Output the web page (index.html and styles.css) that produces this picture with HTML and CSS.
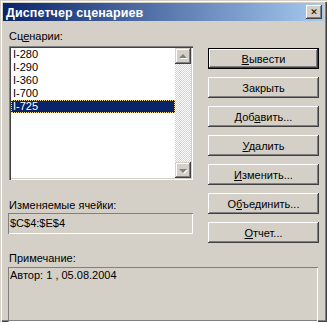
FILE: index.html
```html
<!DOCTYPE html>
<html lang="ru">
<head>
  <meta charset="UTF-8" />
  <title>Диспетчер сценариев</title>
  <link rel="stylesheet" href="styles.css">
</head>
<body>

  <div class="window">
    <div class="titlebar">
      <span class="title">Диспетчер сценариев</span>
      <span class="close-btn">&#x2715;</span>
    </div>

    <div class="content">
      <div class="main">
        <div class="left">
          <div class="label">Сц<u>е</u>нарии:</div>
          <div class="listbox">
            <ul class="items">
              <li>I-280</li>
              <li>I-290</li>
              <li>I-360</li>
              <li>I-700</li>
              <li class="selected">I-725</li>
            </ul>
            <div class="scrollbar">
              <div class="sb-btn"><span class="arrow up"></span></div>
              <div class="sb-track"></div>
              <div class="sb-btn"><span class="arrow down"></span></div>
            </div>
          </div>
          <div class="label label-cells">Изменяемые ячейки:</div>
          <div class="field">$C$4:$E$4</div>
        </div>

        <div class="buttons">
          <button class="btn default"><u>В</u>ывести</button>
          <button class="btn">Закрыть</button>
          <button class="btn">Доб<u>а</u>вить...</button>
          <button class="btn"><u>У</u>далить</button>
          <button class="btn"><u>И</u>зменить...</button>
          <button class="btn">О<u>б</u>ъединить...</button>
          <button class="btn"><u>О</u>тчет...</button>
        </div>
      </div>

      <div class="label label-note">Примечание:</div>
      <div class="field note">Автор: 1 , 05.08.2004</div>
    </div>
  </div>

</body>
</html>
```

FILE: styles.css
```css
/* Reset */
* {
  box-sizing: border-box;
  margin: 0;
  padding: 0;
}

body {
  font-family: 'Liberation Sans', Arial, sans-serif;
  font-size: 11px;
  color: #000;
  background: #d4d0c8;
}

/* Window frame */
.window {
  width: 327px;
  height: 322px;
  background: #d4d0c8;
  padding: 3px 3px 3px 3px;
  box-shadow: inset 1px 1px #d4d0c8, inset 2px 2px #fff,
              inset -1px -1px #404040, inset -2px -2px #808080;
}

/* Title bar */
.titlebar {
  height: 18px;
  display: flex;
  align-items: center;
  justify-content: space-between;
  padding: 0 2px 0 3px;
  background: linear-gradient(to right, #0a246a, #a6caf0);
}

.title {
  color: #fff;
  font-weight: bold;
  font-size: 12.5px;
  letter-spacing: 0.1px;
  margin-top: 1px;
}

.close-btn {
  width: 16px;
  height: 14px;
  background: #d4d0c8;
  display: flex;
  align-items: center;
  justify-content: center;
  font-size: 9px;
  font-weight: bold;
  font-family: 'DejaVu Sans', sans-serif;
  box-shadow: inset -1px -1px #404040, inset 1px 1px #fff, inset -2px -2px #808080;
}

/* Dialog body */
.content {
  padding: 9px 5px 0 5px;
}

.main {
  display: flex;
  gap: 15px;
}

.left {
  width: 185px;
}

.label {
  line-height: 13px;
  padding-left: 1px;
}

u {
  text-decoration: underline;
  text-underline-offset: 1px;
}

/* Scenario list */
.listbox {
  display: flex;
  width: 184px;
  height: 134px;
  margin: 3px 0 0 1px;
  padding: 2px;
  background: #fff;
  box-shadow: inset 1px 1px #808080, inset 2px 2px #404040,
              inset -1px -1px #fff, inset -2px -2px #d4d0c8;
}

.items {
  list-style: none;
  flex: 1;
}

.items li {
  height: 13px;
  line-height: 13px;
  padding-left: 2px;
}

.items li.selected {
  background: #0a246a;
  color: #fff;
  outline: 1px dotted #f5db95;
  outline-offset: -1px;
}

.scrollbar {
  width: 16px;
  display: flex;
  flex-direction: column;
}

.sb-btn {
  height: 16px;
  background: #d4d0c8;
  display: flex;
  align-items: center;
  justify-content: center;
  box-shadow: inset -1px -1px #404040, inset 1px 1px #d4d0c8,
              inset -2px -2px #808080, inset 2px 2px #fff;
}

.sb-track {
  flex: 1;
  background-image: conic-gradient(#fff 25%, #d4d0c8 0 50%, #fff 0 75%, #d4d0c8 0);
  background-size: 2px 2px;
}

.arrow {
  width: 0;
  height: 0;
  border-left: 4px solid transparent;
  border-right: 4px solid transparent;
  filter: drop-shadow(1px 1px 0 #fff);
}

.arrow.up {
  border-bottom: 4px solid #808080;
  margin-top: -1px;
}

.arrow.down {
  border-top: 4px solid #808080;
  margin-top: 1px;
}

/* Fields */
.label-cells {
  margin-top: 19px;
}

.field {
  height: 21px;
  margin-top: 1px;
  padding: 4px 0 0 2px;
  line-height: 13px;
  box-shadow: inset 1px 1px #808080, inset -1px -1px #fff;
}

.label-note {
  margin-top: 9px;
}

.field.note {
  width: 310px;
  height: 55px;
  margin-top: 2px;
  padding-top: 2px;
}

/* Command buttons */
.buttons {
  display: flex;
  flex-direction: column;
  gap: 8px;
  padding-top: 18px;
}

.btn {
  width: 111px;
  height: 21px;
  border: none;
  background: #d4d0c8;
  font-family: inherit;
  font-size: 11px;
  color: #000;
  box-shadow: inset -1px -1px #404040, inset 1px 1px #fff,
              inset -2px -2px #808080, inset 2px 2px #d4d0c8;
}

.btn.default {
  border: 1px solid #000;
  box-shadow: inset -1px -1px #404040, inset 1px 1px #fff,
              inset -2px -2px #808080;
}
```
